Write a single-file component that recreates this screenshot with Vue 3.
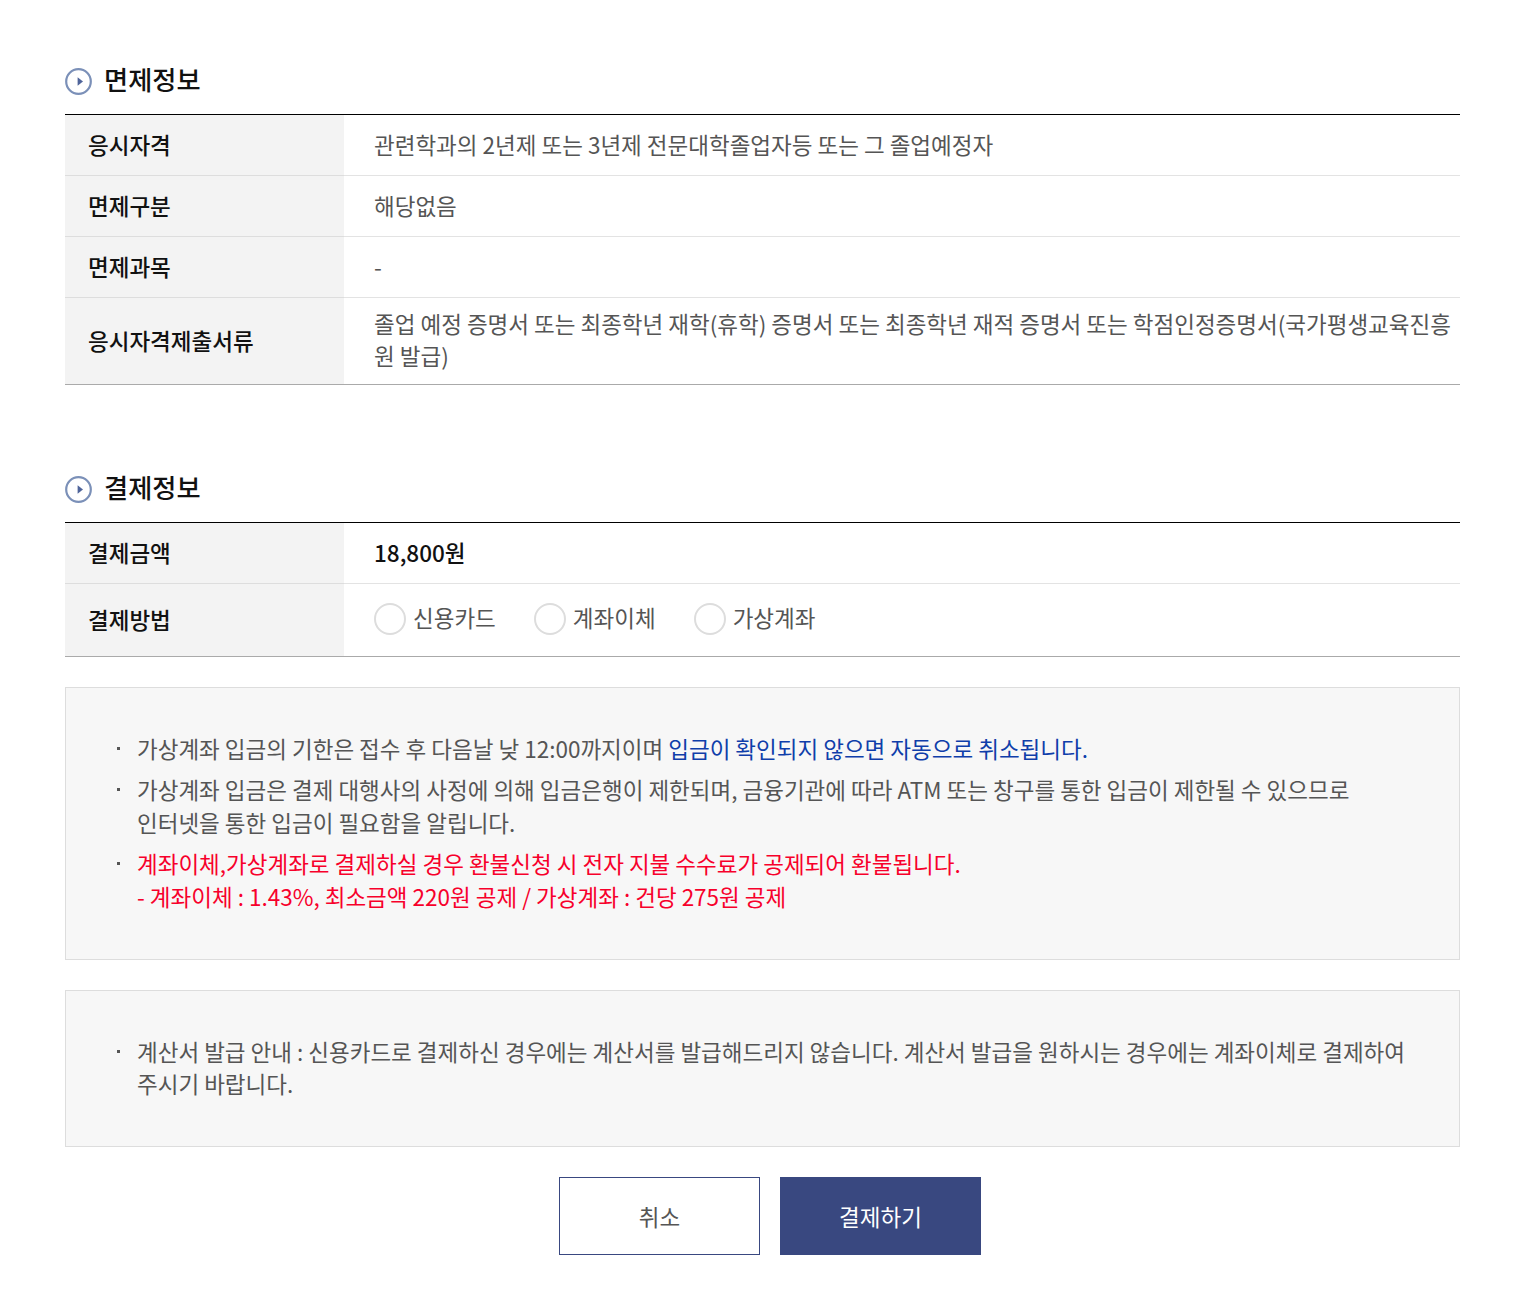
<script setup>
const methods = ['신용카드', '계좌이체', '가상계좌']
</script>

<template>
  <div class="page">
    <h2 class="title">
      <svg class="ico" width="27" height="27" viewBox="0 0 27 27"><circle cx="13.5" cy="13.5" r="12.3" fill="#fff" stroke="#7b90b8" stroke-width="2.2"/><path d="M12.6 9.3l5.4 4.2-5.4 4.2z" fill="#4f649a"/></svg>
      면제정보
    </h2>
    <table class="tbl">
      <tbody>
        <tr><th>응시자격</th><td>관련학과의 2년제 또는 3년제 전문대학졸업자등 또는 그 졸업예정자</td></tr>
        <tr><th>면제구분</th><td>해당없음</td></tr>
        <tr><th>면제과목</th><td>-</td></tr>
        <tr class="tall"><th>응시자격제출서류</th><td>졸업 예정 증명서 또는 최종학년 재학(휴학) 증명서 또는 최종학년 재적 증명서 또는 학점인정증명서(국가평생교육진흥원 발급)</td></tr>
      </tbody>
    </table>

    <h2 class="title second">
      <svg class="ico" width="27" height="27" viewBox="0 0 27 27"><circle cx="13.5" cy="13.5" r="12.3" fill="#fff" stroke="#7b90b8" stroke-width="2.2"/><path d="M12.6 9.3l5.4 4.2-5.4 4.2z" fill="#4f649a"/></svg>
      결제정보
    </h2>
    <table class="tbl">
      <tbody>
        <tr><th>결제금액</th><td class="amount">18,800원</td></tr>
        <tr class="pay"><th>결제방법</th><td>
          <div class="radios">
            <label v-for="m in methods" :key="m" class="radio"><span class="dot"></span><span class="lbl">{{ m }}</span></label>
          </div>
        </td></tr>
      </tbody>
    </table>

    <div class="box">
      <ul>
        <li>가상계좌 입금의 기한은 접수 후 다음날 낮 12:00까지이며 <span class="blue">입금이 확인되지 않으면 자동으로 취소됩니다.</span></li>
        <li>가상계좌 입금은 결제 대행사의 사정에 의해 입금은행이 제한되며, 금융기관에 따라 ATM 또는 창구를 통한 입금이 제한될 수 있으므로<br>인터넷을 통한 입금이 필요함을 알립니다.</li>
        <li class="red">계좌이체,가상계좌로 결제하실 경우 환불신청 시 전자 지불 수수료가 공제되어 환불됩니다.<br>- 계좌이체 : 1.43%, 최소금액 220원 공제 / 가상계좌 : 건당 275원 공제</li>
      </ul>
    </div>
    <div class="box tight">
      <ul>
        <li>계산서 발급 안내 : 신용카드로 결제하신 경우에는 계산서를 발급해드리지 않습니다. 계산서 발급을 원하시는 경우에는 계좌이체로 결제하여 주시기 바랍니다.</li>
      </ul>
    </div>

    <div class="btns">
      <button class="btn cancel">취소</button>
      <button class="btn pay-btn">결제하기</button>
    </div>
  </div>
</template>

<style scoped>
.page {
  box-sizing: border-box;
  width: 1520px;
  height: 1291px;
  padding: 60px 60px 36px 65px;
  font-family: "Noto Sans CJK KR", "Noto Sans", sans-serif;
  font-size: 22.5px;
  color: #555;
  background: #fff;
}
.title {
  display: flex;
  align-items: center;
  gap: 12px;
  margin: 0 0 15px;
  height: 39px;
  font-size: 26.25px;
  line-height: 39px;
  font-weight: 500;
  color: #111;
}
.title.second { margin-top: 83px; }
.ico { flex: none; margin-top: 3px; }
.tbl {
  width: 100%;
  table-layout: fixed;
  border-collapse: separate;
  border-spacing: 0;
  border-top: 1px solid #000;
  border-bottom: 1px solid #aaa;
}
.tbl th {
  box-sizing: border-box;
  width: 279px;
  height: 61px;
  padding: 0 0 2px 23px;
  background: #f3f3f3;
  color: #111;
  font-weight: 500;
  text-align: left;
  border-bottom: 1px solid #ddd;
}
.tbl td {
  box-sizing: border-box;
  height: 61px;
  padding: 0 0 2px 30px;
  line-height: 32px;
  border-bottom: 1px solid #e3e3e3;
}
.tbl tr:last-child th, .tbl tr:last-child td { border-bottom: 0; }
.tbl .tall th, .tbl .tall td { height: 86px; }
.tbl .tall td { padding-bottom: 4px; }
.tbl .amount { color: #111; font-weight: 500; }
.tbl .pay th, .tbl .pay td { height: 72px; }
.tbl .pay td { padding-bottom: 0; }
.radios { display: flex; gap: 38px; margin-top: -3px; }
.radio { display: flex; align-items: center; gap: 7px; }
.lbl { padding-bottom: 4px; }
.dot {
  box-sizing: border-box;
  width: 32px;
  height: 32px;
  border: 2px solid #ddd;
  border-radius: 50%;
  background: #fff;
}
.box {
  box-sizing: border-box;
  margin-top: 30px;
  padding: 44px 50px 46px;
  background: #f7f7f7;
  border: 1px solid #ddd;
}
.box.tight { padding-bottom: 47px; }
.box.tight li { line-height: 32px; }
.box ul { margin: 0; padding: 0; list-style: none; }
.box li {
  position: relative;
  padding-left: 21px;
  line-height: 33px;
  margin-top: 8px;
}
.box li:first-child { margin-top: 0; }
.box li::before {
  content: "";
  position: absolute;
  left: 1px;
  top: 15px;
  width: 3px;
  height: 3px;
  background: #555;
}
.blue { color: #0f3eaa; }
.red { color: #f7002b; }
.btns { display: flex; justify-content: center; gap: 20px; margin-top: 30px; padding-left: 15px; }
.btn {
  box-sizing: border-box;
  width: 201px;
  height: 78px;
  font: inherit;
  cursor: pointer;
  border: 1px solid #394880;
}
.cancel { background: #fff; color: #555; }
.pay-btn { background: #394880; color: #fff; }
</style>
